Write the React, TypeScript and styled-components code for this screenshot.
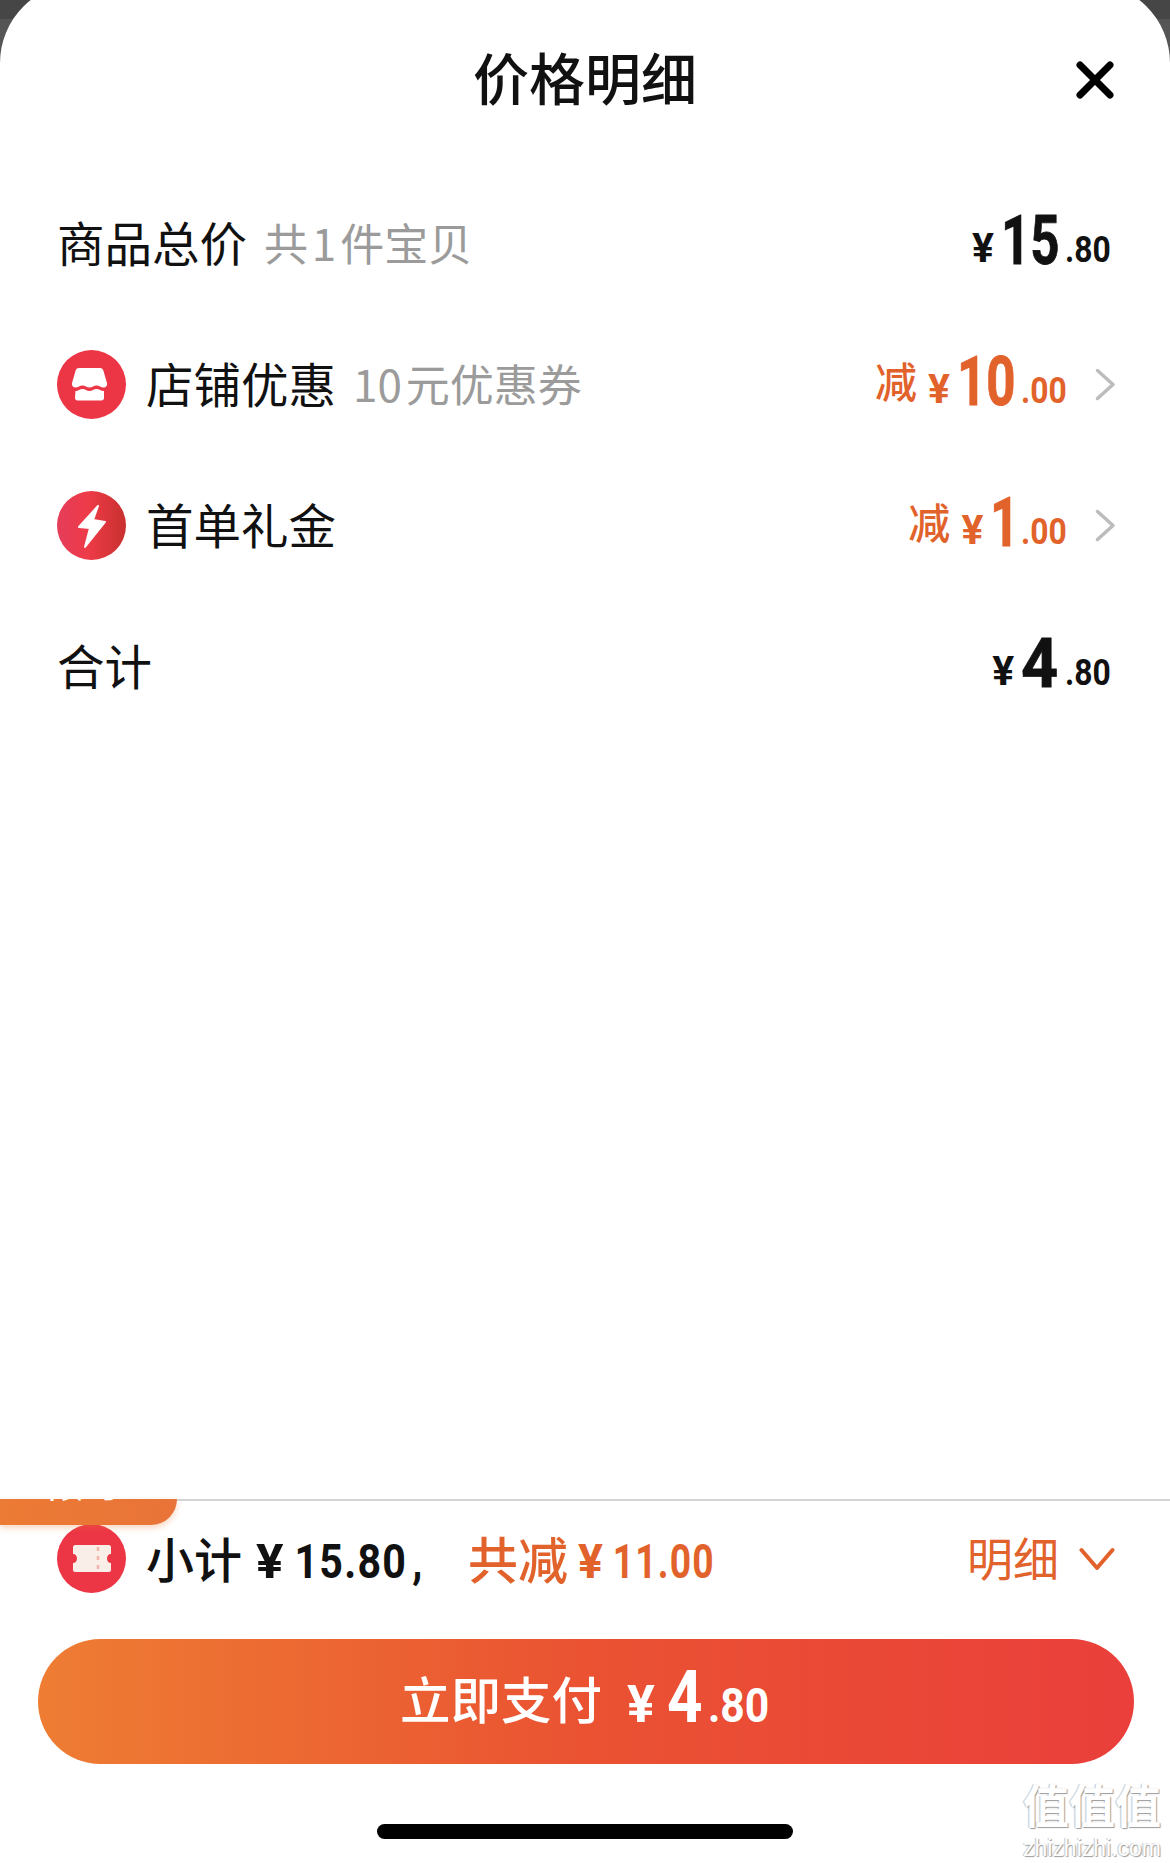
import styled, { createGlobalStyle, css } from "styled-components";

const BLACK = "#111";
const ORANGE = "#e2622c";
const CJK = `"Noto Sans CJK SC", sans-serif`;
const DIGITS = `"Roboto", sans-serif`;

const GlobalStyle = createGlobalStyle`
  html, body {
    margin: 0;
    padding: 0;
    width: 1170px;
    height: 1863px;
    overflow: hidden;
    background: linear-gradient(#464646 19px, #555 19px);
  }
`;

const Sheet = styled.div`
  position: relative;
  margin-top: -17px;
  width: 1170px;
  height: 1880px;
  display: flex;
  flex-direction: column;
  background: #fff;
  border-radius: 80px 80px 0 0;
  overflow: hidden;
  font-family: ${CJK};
  color: ${BLACK};
`;

const Header = styled.header`
  height: 173px;
  padding: 17px 55px 0;
  box-sizing: border-box;
  display: grid;
  grid-template-columns: 40px 1fr 40px;
  align-items: start;
`;

const Title = styled.h1`
  grid-column: 2;
  margin: 46px 0 0;
  text-align: center;
  font-size: 56px;
  line-height: 60px;
  font-weight: 500;
`;

const CloseButton = styled.button`
  grid-column: 3;
  width: 40px;
  height: 40px;
  margin-top: 60px;
  padding: 0;
  border: 0;
  background: none;
  display: flex;
`;

const Rows = styled.section`
  padding-top: 17px;
  display: flex;
  flex-direction: column;
`;

const Row = styled.div<{ $nav?: boolean }>`
  height: 141px;
  padding: 0 ${(p) => (p.$nav ? 54 : 60)}px 0 57px;
  display: flex;
  align-items: center;
`;

const Badge = styled.span<{ $bg: string }>`
  width: 69px;
  height: 69px;
  flex: none;
  margin-right: 20px;
  border-radius: 50%;
  background: ${(p) => p.$bg};
  display: flex;
`;

const Label = styled.span`
  margin-bottom: 4px;
  font-size: 47.5px;
  line-height: 60px;
`;

const Note = styled.span`
  margin: 0 0 4px 17px;
  font-size: 44px;
  line-height: 60px;
  word-spacing: -6px;
  color: #9b9b9b;
`;

const Price = styled.div<{ $color?: string }>`
  margin: 0 0 10px auto;
  display: flex;
  align-items: baseline;
  font-family: ${DIGITS};
  font-weight: 700;
  color: ${(p) => p.$color ?? BLACK};
`;

const Cut = styled.span`
  margin-right: 11px;
  font-family: ${CJK};
  font-size: 42px;
  font-weight: 500;
  line-height: 1;
  transform: translateY(-5px);
`;

const Yen = styled.span<{ $size?: number; $gap?: number }>`
  margin-right: ${(p) => p.$gap ?? 7}px;
  font-size: ${(p) => p.$size ?? 41}px;
  line-height: 1;
`;

// Roboto has no condensed cut here, so the figures are squeezed sideways
const squeezed = css<{ $x: number }>`
  display: inline-block;
  white-space: nowrap;
  transform-origin: 0 50%;
  transform: scaleX(${(p) => p.$x});
`;

const Whole = styled.span<{ $digits: number; $x: number }>`
  ${squeezed}
  transform: translateY(2px) scaleX(${(p) => p.$x});
  width: ${(p) => p.$digits * 29}px;
  margin-right: 6px;
  font-size: 68px;
  line-height: 1;
  -webkit-text-stroke: 0.8px currentColor;
`;

const Cents = styled.span<{ $x: number }>`
  ${squeezed}
  width: 45px;
  font-size: 37px;
  line-height: 1;
`;

const Arrow = styled.svg`
  width: 21px;
  height: 33px;
  margin-left: 29px;
  flex: none;
`;

const Spacer = styled.div`
  flex: 1;
`;

const Footer = styled.footer`
  position: relative;
  height: 364px;
  display: flex;
  flex-direction: column;
  border-top: 2px solid #d4d4d4;
  box-sizing: border-box;
`;

// promo tag hanging off the divider, only its lower edge is visible
const PromoTag = styled.div`
  position: absolute;
  top: -2px;
  left: 0;
  width: 177px;
  height: 26px;
  overflow: hidden;
  background: linear-gradient(90deg, #ec7b35, #e97338);
  border-radius: 0 0 30px 0;
  box-shadow: 0 3px 6px rgba(236, 123, 53, 0.3);
  text-align: center;
  color: #fff;
  font-size: 36px;
  font-weight: 500;
  line-height: 1;
`;

const PromoText = styled.span`
  display: block;
  margin: -35px 0 0 -10px;
`;

const Summary = styled.div`
  height: 138px;
  padding: 0 55px 23px 57px;
  box-sizing: border-box;
  display: flex;
  align-items: center;
`;

const SummaryLabel = styled.span<{ $color?: string; $size?: number }>`
  margin-bottom: 4px;
  font-size: ${(p) => p.$size ?? 48}px;
  line-height: 60px;
  font-weight: 500;
  color: ${(p) => p.$color ?? BLACK};
`;

const SummaryFigure = styled.span<{ $color?: string; $width: number; $lead: number }>`
  width: ${(p) => p.$width}px;
  flex: none;
  margin: 7px 0 0 ${(p) => p.$lead}px;
  font-family: ${DIGITS};
  font-size: 49px;
  font-weight: 700;
  line-height: 60px;
  color: ${(p) => p.$color ?? BLACK};
`;

const SummaryDigits = styled.span<{ $x: number }>`
  ${squeezed}
  letter-spacing: 1.5px;
`;

const SummaryYen = styled.span`
  display: inline-block;
  margin-right: 18px;
  transform-origin: 0 50%;
  transform: scaleX(1.25);
`;

const SummaryComma = styled.span`
  margin-left: 6px;
`;

const DetailToggle = styled.span`
  margin-left: auto;
  display: flex;
  align-items: center;
  gap: 20px;
  font-size: 46px;
  line-height: 60px;
  color: ${ORANGE};
`;

const DetailText = styled.span`
  margin-bottom: 6px;
`;

const PayButton = styled.button`
  width: 1096px;
  height: 125px;
  margin: 0 0 0 38px;
  border: 0;
  border-radius: 63px;
  padding: 0 0 9px;
  background: linear-gradient(90deg, #ee7d33, #ea5232 50%, #ea3f3b);
  color: #fff;
  font-family: ${CJK};
  font-size: 50.5px;
  font-weight: 500;
  display: flex;
  justify-content: center;
  align-items: center;
`;

const PayLabel = styled.span`
  margin-right: 25px;
  line-height: 60px;
`;

const PayPrice = styled.span`
  display: flex;
  align-items: baseline;
  font-family: ${DIGITS};
  font-weight: 700;
`;

const PayWhole = styled.span<{ $x: number }>`
  ${squeezed}
  width: 39px;
  margin-right: 2px;
  font-size: 73px;
  line-height: 1;
`;

const PayCents = styled.span<{ $x: number }>`
  ${squeezed}
  width: 64px;
  font-size: 49px;
  line-height: 1;
`;

const HomeBar = styled.div`
  width: 416px;
  height: 15px;
  margin: 60px 0 0 377px;
  border-radius: 8px;
  background: #000;
`;

const Watermark = styled.div`
  position: absolute;
  right: 7px;
  bottom: 5px;
  width: 142px;
  text-align: center;
  color: #fff;
  text-shadow: 1px 1px 1px #9a9a9a, -1px 0 1px #c4c4c4;
`;

const WatermarkMark = styled.div`
  font-family: "Liberation Sans", ${CJK};
  font-size: 46px;
  line-height: 46px;
  font-weight: 700;
`;

const WatermarkSite = styled.div`
  margin-top: 8px;
  font-family: "Liberation Sans", sans-serif;
  font-size: 23px;
  line-height: 20px;
`;

const CloseIcon = () => (
  <svg width="40" height="40" viewBox="0 0 40 40">
    <path d="M5 5 35 35M35 5 5 35" stroke="#000" strokeWidth="7" strokeLinecap="round" />
  </svg>
);

const ShopIcon = () => (
  <svg width="69" height="69" viewBox="0 0 69 69">
    <path
      d="M24 18h19c2 0 3 1 3.500 3l3.500 12c.5 2.500-1 4.500-3.500 4.500-2.800 0-4-2-7-2s-4 2-7 2-4-2-7-2-4 2-7 2c-2.500 0-4-2-3.500-4.500l3.500-12c.5-2 1.500-3 3.500-3z"
      fill="#fff"
    />
    <path
      d="M18.500 41c3 0 4-2 7-2s4 2 7 2 4-2 7-2 4 2 7.500 2v7c0 1.500-1 2.500-2.500 2.500h-24c-1.500 0-2.500-1-2.500-2.500z"
      fill="#fff"
    />
  </svg>
);

const BoltIcon = () => (
  <svg width="69" height="69" viewBox="0 0 69 69">
    <path
      d="M41 15 22 36l11 1-5 19 20-25-12-2z"
      fill="#fff"
      stroke="#fff"
      strokeWidth="2"
      strokeLinejoin="round"
    />
  </svg>
);

const TicketIcon = () => (
  <svg width="69" height="69" viewBox="0 0 69 69">
    <path
      d="M18 21h34c1 0 2 1 2 2v7c-2.500 0-4 2-4 4.500s1.500 4.500 4 4.500v7c0 1-1 2-2 2H18c-1 0-2-1-2-2v-7c2.500 0 4-2 4-4.500S18.500 30 16 30v-7c0-1 1-2 2-2z"
      fill="#faeee8"
    />
    <path d="M41 23v25" stroke="#f2b3a9" strokeWidth="2.500" strokeDasharray="4 5" />
  </svg>
);

const ChevronRight = () => (
  <Arrow viewBox="0 0 21 33">
    <path d="M2.500 2.500 18 16.500 2.500 30.500" fill="none" stroke="#bcbcbc" strokeWidth="3.500" strokeLinecap="round" strokeLinejoin="round" />
  </Arrow>
);

const ChevronDown = () => (
  <svg width="36" height="24" viewBox="0 0 36 24">
    <path d="M2.500 3 18 21 33.500 3" fill="none" stroke={ORANGE} strokeWidth="4" strokeLinecap="round" strokeLinejoin="round" />
  </svg>
);

export default function App() {
  return (
    <>
      <GlobalStyle />
      <Sheet>
        <Header>
          <Title>价格明细</Title>
          <CloseButton aria-label="关闭">
            <CloseIcon />
          </CloseButton>
        </Header>

        <Rows>
          <Row>
            <Label>商品总价</Label>
            <Note>共 1 件宝贝</Note>
            <Price>
              <Yen>¥</Yen>
              <Whole $digits={2} $x={0.75}>15</Whole>
              <Cents $x={0.86}>.80</Cents>
            </Price>
          </Row>
          <Row $nav>
            <Badge $bg="#ec3545">
              <ShopIcon />
            </Badge>
            <Label>店铺优惠</Label>
            <Note>10 元优惠券</Note>
            <Price $color={ORANGE}>
              <Cut>减</Cut>
              <Yen>¥</Yen>
              <Whole $digits={2} $x={0.75}>10</Whole>
              <Cents $x={0.86}>.00</Cents>
            </Price>
            <ChevronRight />
          </Row>
          <Row $nav>
            <Badge $bg="linear-gradient(90deg, #e53d5a, #ee3b48 45%, #c8302e)">
              <BoltIcon />
            </Badge>
            <Label>首单礼金</Label>
            <Price $color={ORANGE}>
              <Cut>减</Cut>
              <Yen>¥</Yen>
              <Whole $digits={0.85} $x={0.75}>1</Whole>
              <Cents $x={0.86}>.00</Cents>
            </Price>
            <ChevronRight />
          </Row>
          <Row>
            <Label>合计</Label>
            <Price>
              <Yen>¥</Yen>
              <Whole $digits={1.3} $x={0.95}>4</Whole>
              <Cents $x={0.86}>.80</Cents>
            </Price>
          </Row>
        </Rows>

        <Spacer />

        <Footer>
          <PromoTag>
            <PromoText>限时</PromoText>
          </PromoTag>
          <Summary>
            <Badge $bg="#ec3545">
              <TicketIcon />
            </Badge>
            <SummaryLabel>小计</SummaryLabel>
            <SummaryFigure $width={212} $lead={14}>
              <SummaryDigits $x={0.84}>
                <SummaryYen>¥</SummaryYen>15.80<SummaryComma>,</SummaryComma>
              </SummaryDigits>
            </SummaryFigure>
            <SummaryLabel $color={ORANGE} $size={50}>共减</SummaryLabel>
            <SummaryFigure $color={ORANGE} $width={140} $lead={10}>
              <SummaryDigits $x={0.76}>
                <SummaryYen>¥</SummaryYen>11.00
              </SummaryDigits>
            </SummaryFigure>
            <DetailToggle>
              <DetailText>明细</DetailText>
              <ChevronDown />
            </DetailToggle>
          </Summary>
          <PayButton>
            <PayLabel>立即支付</PayLabel>
            <PayPrice>
              <Yen $size={52} $gap={12}>¥</Yen>
              <PayWhole $x={0.85}>4</PayWhole>
              <PayCents $x={0.87}>.80</PayCents>
            </PayPrice>
          </PayButton>
          <HomeBar />
          <Watermark>
            <WatermarkMark>值值值</WatermarkMark>
            <WatermarkSite>zhizhizhi.com</WatermarkSite>
          </Watermark>
        </Footer>
      </Sheet>
    </>
  );
}
